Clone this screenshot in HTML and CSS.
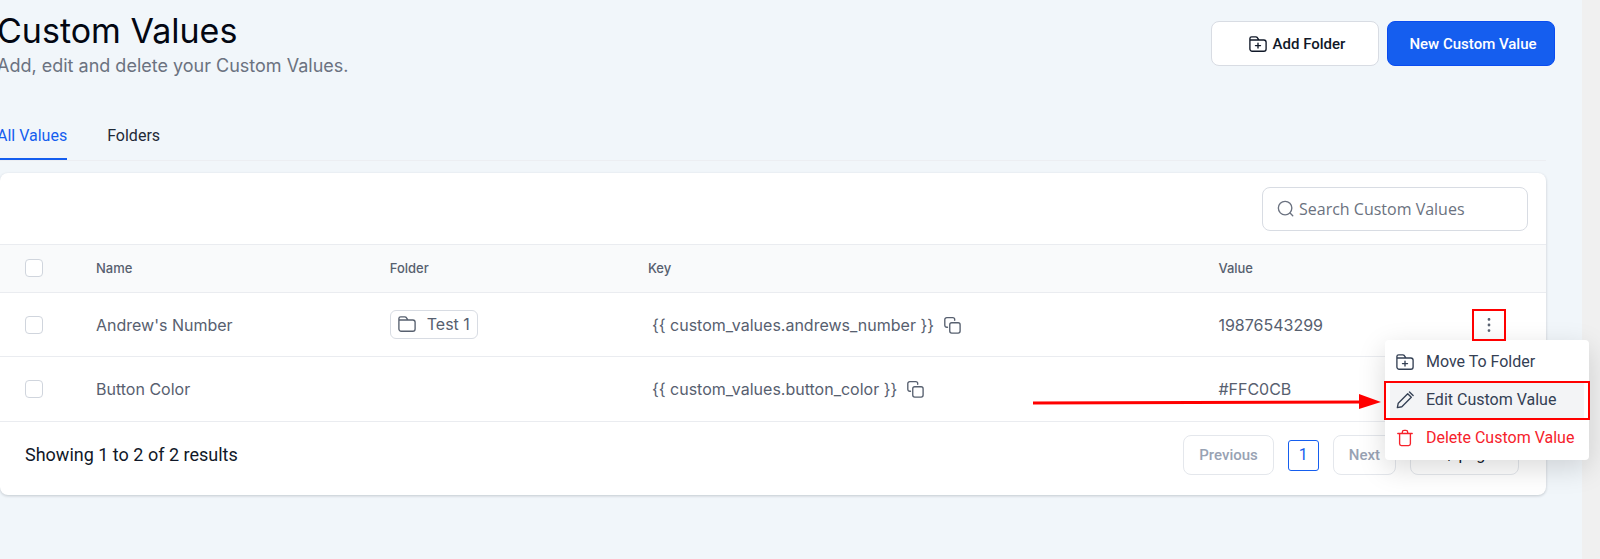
FILE: index.html
```html
<!DOCTYPE html>
<html lang="en">
<head>
    <meta charset="UTF-8">
    <meta name="viewport" content="width=device-width, initial-scale=1.0">
    <title>Custom Values</title>
    <link rel="stylesheet" href="styles.css">
</head>
<body>
    <!-- shared icons -->
    <svg class="sprite" aria-hidden="true">
        <symbol id="icon-folder" viewBox="0 0 20 20">
            <path d="M1 7V4a2 2 0 0 1 2-2h4.600a2 2 0 0 1 1.600.8L11 5.500M1 5.500h15.500A2.500 2.500 0 0 1 19 8v7.500a2.500 2.500 0 0 1-2.500 2.500h-13A2.500 2.500 0 0 1 1 15.500z"/>
        </symbol>
        <symbol id="icon-folder-plus" viewBox="0 0 20 20">
            <path d="M1 7V4a2 2 0 0 1 2-2h4.600a2 2 0 0 1 1.600.8L11 5.500M1 5.500h15.500A2.500 2.500 0 0 1 19 8v7.500a2.500 2.500 0 0 1-2.500 2.500h-13A2.500 2.500 0 0 1 1 15.500zM10 9v5.500M7.200 11.750h5.600"/>
        </symbol>
        <symbol id="icon-copy" viewBox="0 0 20 20">
            <path d="M5 12.500h-.8A2.200 2.200 0 0 1 2 10.300V4a2.200 2.200 0 0 1 2.200-2.200h6.600A2.200 2.200 0 0 1 13 4v.8"/>
            <rect x="7.500" y="7.500" width="11.500" height="11.500" rx="2.200"/>
        </symbol>
    </svg>

    <main class="page">
        <header class="page-header">
            <div>
                <h1>Custom Values</h1>
                <p class="subtitle">Add, edit and delete your Custom Values.</p>
            </div>
            <div class="header-actions">
                <button type="button" class="btn">
                    <svg class="icon"><use href="#icon-folder-plus"/></svg>
                    Add Folder
                </button>
                <button type="button" class="btn btn-primary">New Custom Value</button>
            </div>
        </header>

        <nav class="tabs">
            <a href="#all" class="tab active">All Values</a>
            <a href="#folders" class="tab">Folders</a>
        </nav>

        <section class="card">
            <div class="toolbar">
                <label class="search">
                    <svg class="icon" viewBox="0 0 20 20"><circle cx="9" cy="9" r="7.500"/><path d="M14.500 14.500l3 3"/></svg>
                    <input type="text" placeholder="Search Custom Values" aria-label="Search Custom Values">
                </label>
            </div>

            <table class="values">
                <thead>
                    <tr>
                        <th class="col-check"><input type="checkbox" aria-label="Select all"></th>
                        <th class="col-name">Name</th>
                        <th class="col-folder">Folder</th>
                        <th class="col-key">Key</th>
                        <th class="col-value">Value</th>
                        <th class="col-actions"></th>
                    </tr>
                </thead>
                <tbody>
                    <tr>
                        <td class="col-check"><input type="checkbox" aria-label="Select Andrew's Number"></td>
                        <td>Andrew's Number</td>
                        <td>
                            <span class="tag"><svg class="icon"><use href="#icon-folder"/></svg>Test 1</span>
                        </td>
                        <td>
                            <div class="key">
                                {{ custom_values.andrews_number }}
                                <button type="button" class="icon-btn" aria-label="Copy key"><svg class="icon"><use href="#icon-copy"/></svg></button>
                            </div>
                        </td>
                        <td>19876543299</td>
                        <td>
                            <div class="row-menu">
                                <button type="button" class="icon-btn dots" aria-label="Actions">
                                    <svg class="icon" viewBox="0 0 20 20"><circle cx="10" cy="3" r="1"/><circle cx="10" cy="10" r="1"/><circle cx="10" cy="17" r="1"/></svg>
                                </button>
                                <div class="menu">
                                    <button type="button" class="menu-item">
                                        <svg class="icon"><use href="#icon-folder-plus"/></svg>
                                        Move To Folder
                                    </button>
                                    <button type="button" class="menu-item highlighted">
                                        <svg class="icon" viewBox="0 0 20 20"><path d="M1.500 18.500l1-5L13 3l4 4L6.500 17.500zM15 1l4 4"/></svg>
                                        Edit Custom Value
                                    </button>
                                    <button type="button" class="menu-item danger">
                                        <svg class="icon" viewBox="0 0 20 20"><path d="M2 5h16M4 5v11.500a2 2 0 0 0 2 2h8a2 2 0 0 0 2-2V5M7 5V3.500a2 2 0 0 1 2-2h2a2 2 0 0 1 2 2V5"/></svg>
                                        Delete Custom Value
                                    </button>
                                    <svg class="arrow" viewBox="0 0 348 16" aria-hidden="true"><path class="shaft" d="M0 9L330 8"/><path class="head" d="M326 0L348 8L326 15z"/></svg>
                                </div>
                            </div>
                        </td>
                    </tr>
                    <tr>
                        <td class="col-check"><input type="checkbox" aria-label="Select Button Color"></td>
                        <td>Button Color</td>
                        <td></td>
                        <td>
                            <div class="key">
                                {{ custom_values.button_color }}
                                <button type="button" class="icon-btn" aria-label="Copy key"><svg class="icon"><use href="#icon-copy"/></svg></button>
                            </div>
                        </td>
                        <td>#FFC0CB</td>
                        <td></td>
                    </tr>
                </tbody>
            </table>

            <footer class="card-footer">
                <p>Showing 1 to 2 of 2 results</p>
                <div class="pagination">
                    <button type="button" class="page-btn" disabled>Previous</button>
                    <button type="button" class="page-number">1</button>
                    <button type="button" class="page-btn" disabled>Next</button>
                    <select class="page-size" aria-label="Rows per page">
                        <option>10 / page</option>
                    </select>
                </div>
            </footer>
        </section>
    </main>
</body>
</html>
```

FILE: styles.css
```css
* {
    box-sizing: border-box;
}
body {
    margin: 0;
    min-height: 100vh;
    background: linear-gradient(to left, #f0f0f0 18px, #f1f6fa 18px);
    font-family: Inter, sans-serif;
    font-size: 16px;
    line-height: 24px;
    color: #101828;
}
h1, p {
    margin: 0;
}
button, input, select {
    font: inherit;
    color: inherit;
}
.sprite {
    position: absolute;
    width: 0;
    height: 0;
}
.icon {
    width: 18px;
    height: 18px;
    flex: none;
    fill: none;
    stroke: currentColor;
    stroke-width: 1.5;
    stroke-linecap: round;
    stroke-linejoin: round;
}
.page {
    padding-right: 54px;
}

/* header */
.page-header {
    display: flex;
    justify-content: space-between;
    align-items: flex-start;
    margin: 0 -9px 0 -3px;
    padding-top: 11px;
}
h1 {
    font-size: 34px;
    font-weight: 400;
    line-height: 40px;
    color: #030712;
}
.subtitle {
    font-size: 18px;
    line-height: 30px;
    color: #6b7280;
}
.header-actions {
    display: flex;
    gap: 8px;
    padding-top: 10px;
}
.btn {
    display: flex;
    align-items: center;
    justify-content: center;
    gap: 6px;
    width: 168px;
    height: 45px;
    padding: 0 0 0 4px;
    border: 1px solid #d8dce3;
    border-radius: 8px;
    background-color: #fff;
    font-family: Roboto, sans-serif;
    font-size: 15px;
    font-weight: 500;
}
.btn-primary {
    border-color: #0a4cf0;
    background-color: #155eef;
    color: #fff;
}

/* tabs */
.tabs {
    display: flex;
    gap: 40px;
    margin: 43px 0 0 -3px;
    border-bottom: 1px solid #eceef2;
    font-family: Roboto, sans-serif;
}
.tab {
    padding-bottom: 10px;
    border-bottom: 2px solid transparent;
    color: #1f2937;
    text-decoration: none;
}
.tab.active {
    border-color: #155eef;
    color: #155eef;
}

/* card */
.card {
    margin-top: 12px;
    border-radius: 8px;
    background-color: #fff;
    box-shadow: 0 1px 3px rgba(16, 24, 40, 0.2);
}
.toolbar {
    display: flex;
    justify-content: flex-end;
    padding: 14px 18px 13px;
}
.search {
    display: flex;
    align-items: center;
    gap: 4px;
    width: 266px;
    height: 44px;
    padding: 0 14px;
    border: 1px solid #d8dce3;
    border-radius: 8px;
    color: #6b7280;
}
.search input {
    width: 100%;
    padding: 0;
    border: 0;
    outline: 0;
    background: none;
    font-family: "Open Sans", sans-serif;
}
.search input::placeholder {
    color: #6b7280;
}

/* table */
.values {
    width: 100%;
    table-layout: fixed;
    border-collapse: collapse;
    color: #57606f;
}
.values th {
    height: 48px;
    padding: 0 0 2px;
    background-color: #f9fafb;
    border-top: 1px solid #eaecf0;
    font-size: 13px;
    font-weight: 500;
    text-align: left;
}
.values td {
    height: 64px;
    padding: 0;
    border-top: 1px solid #eaecf0;
}
.values .col-check {
    width: 96px;
    padding-left: 25px;
}
.col-name {
    width: 19%;
}
.col-folder {
    width: 16.7%;
}
.col-key {
    width: 36.9%;
}
.col-value {
    width: 16.4%;
}
input[type="checkbox"] {
    appearance: none;
    display: block;
    width: 18px;
    height: 18px;
    margin: 0;
    border: 1px solid #d0d5dd;
    border-radius: 4px;
    background-color: #fff;
}
.tag {
    display: inline-flex;
    align-items: center;
    gap: 11px;
    height: 29px;
    padding: 0 7px;
    border: 1px solid #d8dce3;
    border-radius: 6px;
}
.key {
    display: flex;
    align-items: center;
    gap: 9px;
    padding-left: 4px;
}
.icon-btn {
    display: flex;
    align-items: center;
    justify-content: center;
    padding: 0;
    border: 0;
    background: none;
}

/* row menu */
.row-menu {
    position: relative;
    width: 34px;
}
.dots {
    position: relative;
    z-index: 2;
    width: 34px;
    height: 32px;
    border: 2px solid #f00;
}
.dots .icon {
    height: 16px;
    fill: currentColor;
}
.menu {
    position: absolute;
    top: 31px;
    right: -83px;
    z-index: 1;
    width: 204px;
    padding: 3px 0;
    border-radius: 4px;
    background-color: #fff;
    box-shadow: 0 8px 28px rgba(0, 0, 0, 0.15);
}
.menu-item {
    display: flex;
    align-items: center;
    gap: 12px;
    width: 100%;
    height: 38px;
    padding: 0 11px;
    border: 0;
    background: none;
    font-family: Roboto, sans-serif;
    color: #344054;
}
.menu-item.highlighted {
    position: relative;
    width: auto;
    min-width: 194px;
    margin: 0 5px;
    padding: 0 6px;
    background-color: #f3f4f6;
}
.menu-item.highlighted::after {
    content: "";
    position: absolute;
    inset: 0 -6px -1px;
    border: 2px solid #f00;
}
.menu-item.danger {
    color: #f6222b;
}
.arrow {
    position: absolute;
    top: 54px;
    right: 208px;
    width: 348px;
    height: 16px;
}
.arrow .shaft {
    stroke: #f00;
    stroke-width: 3;
}
.arrow .head {
    fill: #f00;
}

/* footer */
.card-footer {
    display: flex;
    justify-content: space-between;
    align-items: center;
    height: 74px;
    padding: 0 27px 6px 25px;
    border-top: 1px solid #eaecf0;
}
.card-footer p {
    font-family: Roboto, sans-serif;
    font-size: 18px;
}
.pagination {
    display: flex;
    align-items: center;
    gap: 14px;
    font-family: Roboto, sans-serif;
}
.page-btn,
.page-size {
    height: 40px;
    padding: 0 15px;
    border: 1px solid #e4e7ec;
    border-radius: 8px;
    background-color: #fff;
}
.page-btn {
    color: #98a2b3;
    font-size: 15px;
    font-weight: 500;
}
.page-number {
    width: 31px;
    height: 31px;
    padding: 0;
    border: 1px solid #155eef;
    border-radius: 3px;
    background-color: #fff;
    color: #155eef;
}
.page-size {
    appearance: none;
    width: 109px;
    color: #101828;
}
```
